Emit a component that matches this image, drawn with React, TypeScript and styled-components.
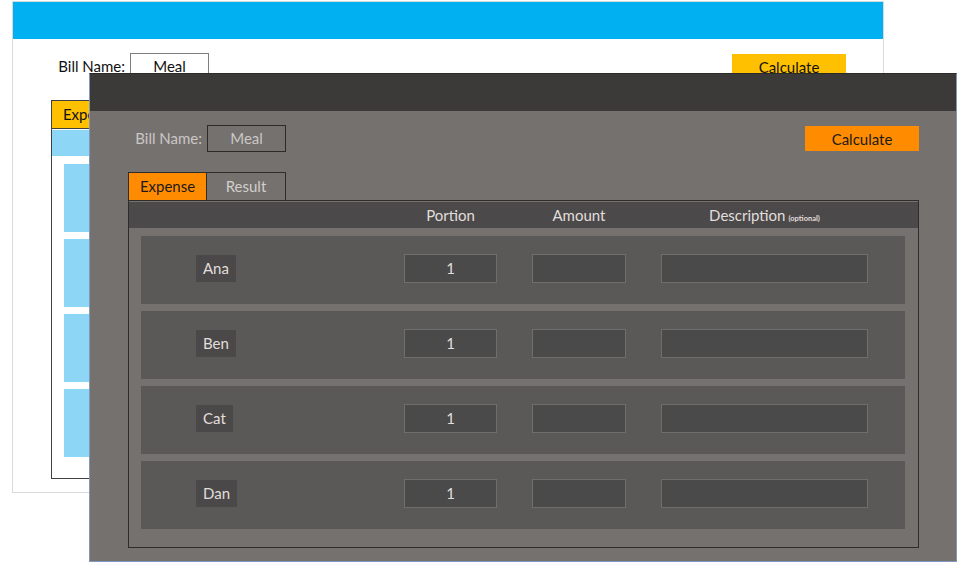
import { FC } from 'react';
import styled, { createGlobalStyle, ThemeProvider } from 'styled-components';

const GlobalStyle = createGlobalStyle`
    html, body {
        margin: 0;
        padding: 0;
        background: #ffffff;
    }
    body {
        font-family: Lato, "Open Sans", sans-serif;
    }
`;

const light = {
    frame: '#d9d9d9',
    frameTop: '#d9d9d9',
    bar: '#00b0f0',
    body: '#ffffff',
    text: '#111111',
    fieldBg: '#ffffff',
    fieldBorder: '#7f7f7f',
    accent: '#ffc000',
    accentText: '#111111',
    tabBg: '#ffffff',
    tabText: '#111111',
    panelBorder: '#404040',
    panelBg: '#ffffff',
    head: '#8ed6f6',
    headText: '#111111',
    card: '#8ed6f6',
    chip: '#8ed6f6',
    chipText: '#111111',
    boxBg: '#ffffff',
    boxBorder: '#7f7f7f',
};

const dark = {
    frame: '#7e98c0',
    frameTop: '#2b2b2b',
    bar: '#3c3a38',
    body: '#75716f',
    text: '#cbc7c5',
    fieldBg: '#75716f',
    fieldBorder: '#2c2b2a',
    accent: '#ff8c00',
    accentText: '#1a1a1a',
    tabBg: '#75716f',
    tabText: '#d2cecc',
    panelBorder: '#2e2d2c',
    panelBg: '#75716f',
    head: '#4b4949',
    headText: '#e2dedc',
    card: '#5b5958',
    chip: '#4a4848',
    chipText: '#e2dedc',
    boxBg: '#4a4a4a',
    boxBorder: '#706e6d',
};

type Palette = typeof dark;

const Desktop = styled.div`
    position: relative;
    width: 980px;
    height: 562px;
    overflow: hidden;
    background: #ffffff;
`;

// the two mock-up windows sit on a free canvas, one over the other
const Window = styled.section<{ $left: number; $top: number; $width: number; $height: number }>`
    position: absolute;
    left: ${p => p.$left}px;
    top: ${p => p.$top}px;
    width: ${p => p.$width}px;
    height: ${p => p.$height}px;
    box-sizing: border-box;
    display: flex;
    flex-direction: column;
    border: 1px solid ${p => (p.theme as Palette).frame};
    border-top-color: ${p => (p.theme as Palette).frameTop};
    background: ${p => (p.theme as Palette).body};
`;

const TitleBar = styled.div`
    height: 37px;
    flex-shrink: 0;
    background: ${p => (p.theme as Palette).bar};
`;

const Body = styled.div`
    flex: 1;
    display: flex;
    flex-direction: column;
    padding: 14px 37px 13px 38px;
    min-height: 0;
`;

const BillRow = styled.div`
    display: flex;
    align-items: flex-start;
    padding-left: 7px;
    height: 27px;
`;

const BillLabel = styled.span`
    width: 72px;
    box-sizing: border-box;
    padding-right: 5px;
    text-align: right;
    font-size: 15px;
    line-height: 27px;
    color: ${p => (p.theme as Palette).text};
    white-space: nowrap;
`;

const BillField = styled.div`
    width: 79px;
    height: 27px;
    box-sizing: border-box;
    border: 1px solid ${p => (p.theme as Palette).fieldBorder};
    background: ${p => (p.theme as Palette).fieldBg};
    color: ${p => (p.theme as Palette).text};
    font-size: 15px;
    line-height: 25px;
    text-align: center;
`;

const CalcButton = styled.button`
    margin: 1px 0 0 auto;
    width: 114px;
    height: 25px;
    border: none;
    padding: 0;
    background: ${p => (p.theme as Palette).accent};
    color: ${p => (p.theme as Palette).accentText};
    font-family: Lato, "Open Sans", sans-serif;
    font-size: 15px;
`;

const TabRow = styled.div`
    display: flex;
    margin-top: 20px;
`;

const Tab = styled.div<{ $active?: boolean }>`
    width: 79px;
    height: 28px;
    box-sizing: border-box;
    border: 1px solid ${p => (p.theme as Palette).panelBorder};
    border-bottom: none;
    border-left-width: ${p => (p.$active ? 1 : 0)}px;
    background: ${p => (p.$active ? (p.theme as Palette).accent : (p.theme as Palette).tabBg)};
    color: ${p => (p.$active ? (p.theme as Palette).accentText : (p.theme as Palette).tabText)};
    font-size: 15px;
    line-height: 27px;
    text-align: center;
`;

const Panel = styled.div`
    flex: 1;
    box-sizing: border-box;
    border: 1px solid ${p => (p.theme as Palette).panelBorder};
    background: ${p => (p.theme as Palette).panelBg};
    padding-top: 1px;
    display: flex;
    flex-direction: column;
`;

const HeadRow = styled.div`
    height: 26px;
    flex-shrink: 0;
    display: grid;
    grid-template-columns: 173px 93px 94px 207px;
    column-gap: 35px;
    align-items: center;
    padding-left: 67px;
    background: ${p => (p.theme as Palette).head};
    color: ${p => (p.theme as Palette).headText};
    font-size: 15px;
`;

const HeadCell = styled.div`
    text-align: center;
    white-space: nowrap;
`;

const Hint = styled.span`
    font-size: 7.5px;
    font-weight: 700;
    margin-left: 3px;
`;

const Cards = styled.div`
    display: flex;
    flex-direction: column;
    gap: 7px;
    padding: 8px 13px 0 12px;
`;

const Card = styled.div`
    height: 68px;
    box-sizing: border-box;
    padding: 0 0 3px 55px;
    display: grid;
    grid-template-columns: 173px 93px 94px 207px;
    column-gap: 35px;
    align-items: center;
    background: ${p => (p.theme as Palette).card};
`;

const NameChip = styled.span`
    justify-self: start;
    padding: 4px 7px;
    line-height: 19px;
    font-size: 15px;
    background: ${p => (p.theme as Palette).chip};
    color: ${p => (p.theme as Palette).chipText};
`;

const Box = styled.div`
    height: 29px;
    box-sizing: border-box;
    border: 1px solid ${p => (p.theme as Palette).boxBorder};
    background: ${p => (p.theme as Palette).boxBg};
    color: ${p => (p.theme as Palette).chipText};
    font-size: 15px;
    line-height: 27px;
    text-align: center;
`;

const people = ['Ana', 'Ben', 'Cat', 'Dan'];

const BillWindow: FC<{ left: number; top: number; width: number; height: number }> = ({ left, top, width, height }) => (
    <Window $left={left} $top={top} $width={width} $height={height}>
        <TitleBar />
        <Body>
            <BillRow>
                <BillLabel>Bill Name:</BillLabel>
                <BillField>Meal</BillField>
                <CalcButton>Calculate</CalcButton>
            </BillRow>
            <TabRow>
                <Tab $active>Expense</Tab>
                <Tab>Result</Tab>
            </TabRow>
            <Panel>
                <HeadRow>
                    <span />
                    <HeadCell>Portion</HeadCell>
                    <HeadCell>Amount</HeadCell>
                    <HeadCell>
                        Description<Hint>(optional)</Hint>
                    </HeadCell>
                </HeadRow>
                <Cards>
                    {people.map(name => (
                        <Card key={name}>
                            <NameChip>{name}</NameChip>
                            <Box>1</Box>
                            <Box />
                            <Box />
                        </Card>
                    ))}
                </Cards>
            </Panel>
        </Body>
    </Window>
);

export default function App() {
    return (
        <>
            <GlobalStyle />
            <Desktop>
                <ThemeProvider theme={light}>
                    <BillWindow left={12} top={1} width={872} height={492} />
                </ThemeProvider>
                <ThemeProvider theme={dark}>
                    <BillWindow left={89} top={73} width={868} height={489} />
                </ThemeProvider>
            </Desktop>
        </>
    );
}
